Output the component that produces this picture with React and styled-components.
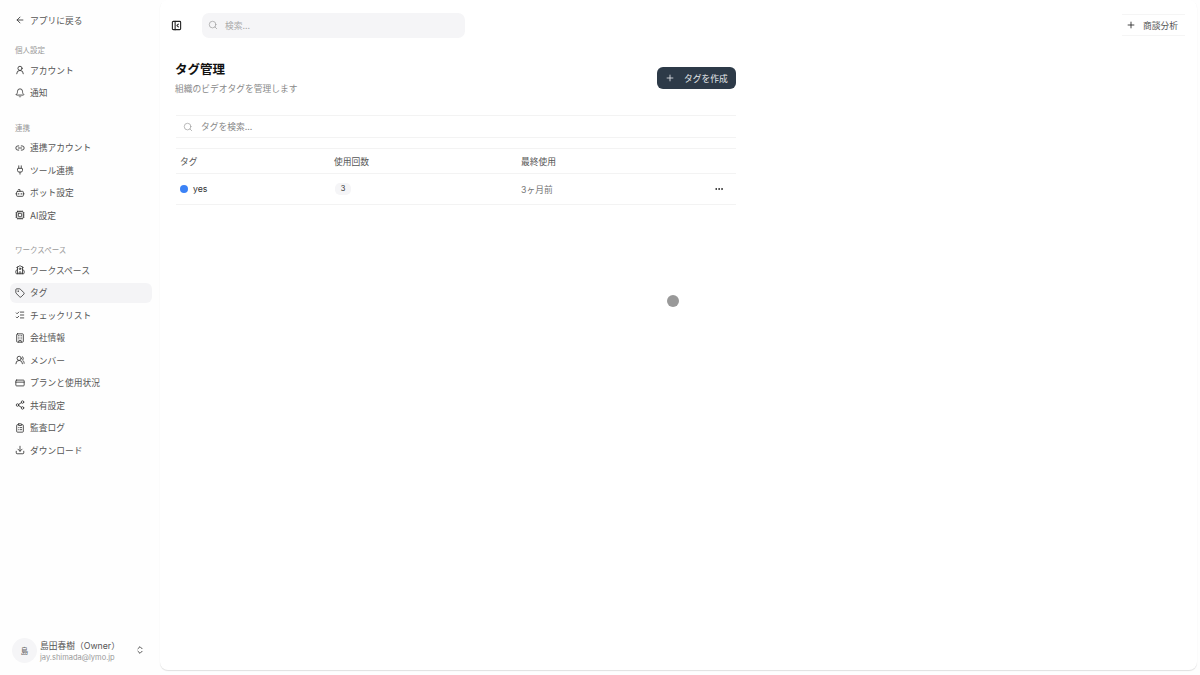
import React from "react";
import styled, { createGlobalStyle } from "styled-components";
import {
  ArrowLeft,
  Bell,
  Bot,
  Building,
  ChevronsUpDown,
  ClipboardList,
  CreditCard,
  Cpu,
  Download,
  Ellipsis,
  Link2,
  ListChecks,
  PanelLeftClose,
  Plug,
  Plus,
  School,
  Search,
  Share2,
  Tag,
  UserRound,
  UsersRound,
} from "lucide-react";

const GlobalStyle = createGlobalStyle`
  html, body {
    margin: 0;
    height: 100%;
    background: #fefefe;
    font-family: Inter, "Noto Sans CJK JP", sans-serif;
  }
  #root {
    height: 100%;
  }
  * {
    box-sizing: border-box;
  }
`;

const groups = [
  {
    label: "個人設定",
    items: [
      { icon: UserRound, text: "アカウント" },
      { icon: Bell, text: "通知" },
    ],
  },
  {
    label: "連携",
    items: [
      { icon: Link2, text: "連携アカウント" },
      { icon: Plug, text: "ツール連携" },
      { icon: Bot, text: "ボット設定" },
      { icon: Cpu, text: "AI設定" },
    ],
  },
  {
    label: "ワークスペース",
    items: [
      { icon: School, text: "ワークスペース" },
      { icon: Tag, text: "タグ", active: true },
      { icon: ListChecks, text: "チェックリスト" },
      { icon: Building, text: "会社情報" },
      { icon: UsersRound, text: "メンバー" },
      { icon: CreditCard, text: "プランと使用状況" },
      { icon: Share2, text: "共有設定" },
      { icon: ClipboardList, text: "監査ログ" },
      { icon: Download, text: "ダウンロード" },
    ],
  },
];

export default function App() {
  return (
    <>
      <GlobalStyle />
      <Page>
        <Sidebar>
          <NavItem>
            <ArrowLeft size={10} strokeWidth={2} />
            アプリに戻る
          </NavItem>
          {groups.map((group) => (
            <NavGroup key={group.label}>
              <GroupLabel>{group.label}</GroupLabel>
              {group.items.map((item) => (
                <NavItem key={item.text} $active={item.active}>
                  <item.icon size={10} strokeWidth={2} />
                  {item.text}
                </NavItem>
              ))}
            </NavGroup>
          ))}
          <UserBox>
            <Avatar>島</Avatar>
            <UserText>
              <UserName>島田春樹（Owner）</UserName>
              <UserMail>jay.shimada@lymo.jp</UserMail>
            </UserText>
            <ChevronsUpDown size={10} strokeWidth={2} color="#333" />
          </UserBox>
        </Sidebar>
        <Panel>
          <TopBar>
            <PanelLeftClose size={11} strokeWidth={2.4} color="#222" />
            <TopSearch>
              <Search size={10} strokeWidth={1.6} color="#999" />
              検索...
            </TopSearch>
            <AnalysisButton>
              <Plus size={10} strokeWidth={2} color="#222" />
              商談分析
            </AnalysisButton>
          </TopBar>
          <Content>
            <Heading>
              <div>
                <Title>タグ管理</Title>
                <Subtitle>組織のビデオタグを管理します</Subtitle>
              </div>
              <CreateButton>
                <Plus size={10} strokeWidth={2} />
                タグを作成
              </CreateButton>
            </Heading>
            <TagSearch>
              <Search size={10} strokeWidth={1.6} color="#999" />
              タグを検索...
            </TagSearch>
            <HeaderRow>
              <div>タグ</div>
              <div>使用回数</div>
              <div>最終使用</div>
            </HeaderRow>
            <TagRow>
              <TagName>
                <Dot />
                yes
              </TagName>
              <div>
                <Count>3</Count>
              </div>
              <LastUsed>3ヶ月前</LastUsed>
              <Ellipsis size={10} strokeWidth={2.4} color="#222" />
            </TagRow>
          </Content>
          <Loader />
        </Panel>
      </Page>
    </>
  );
}

const Page = styled.div`
  display: flex;
  height: 675px;
  overflow: hidden;
`;

const Sidebar = styled.aside`
  width: 160px;
  flex-shrink: 0;
  display: flex;
  flex-direction: column;
  padding: 10px 8px 10px 10px;
`;

const NavGroup = styled.nav`
  display: flex;
  flex-direction: column;
  gap: 2.5px;
  margin-top: 15px;

  &:nth-child(2) {
    margin-top: 10px;
  }
`;

const GroupLabel = styled.div`
  height: 20px;
  margin-bottom: -2.5px;
  padding: 1px 0 0 5px;
  font-size: 7.5px;
  line-height: 20px;
  color: #999;
`;

const NavItem = styled.a`
  height: 20px;
  display: flex;
  align-items: center;
  gap: 5px;
  padding-left: 5px;
  border-radius: 6px;
  font-size: 8.75px;
  color: #555;
  background: ${(p) => (p.$active ? "#f4f4f6" : "transparent")};

  svg {
    flex-shrink: 0;
    color: #333;
  }
`;

const UserBox = styled.div`
  margin-top: auto;
  height: 30px;
  display: flex;
  align-items: center;
  padding-left: 2px;
`;

const Avatar = styled.div`
  width: 25px;
  height: 25px;
  border-radius: 50%;
  display: grid;
  place-items: center;
  background: #f5f5f7;
  font-size: 7.5px;
  color: #666;
`;

const UserText = styled.div`
  width: 95px;
  margin-left: 3px;
  padding-top: 4px;
`;

const UserName = styled.div`
  font-size: 8.75px;
  line-height: 11px;
  color: #555;
`;

const UserMail = styled.div`
  font-size: 7.5px;
  line-height: 11px;
  color: #999;
`;

const Panel = styled.main`
  position: relative;
  flex: 1;
  margin: 0 3px 5px 0;
  background: #fff;
  border-radius: 8px;
  box-shadow: 0 1px 1px rgba(0, 0, 0, 0.12);
`;

const TopBar = styled.header`
  height: 50px;
  display: flex;
  align-items: center;
  padding: 0 12px 0 11px;
`;

const TopSearch = styled.div`
  width: 263px;
  height: 25px;
  margin-left: 20px;
  display: flex;
  align-items: center;
  gap: 7px;
  padding-left: 6px;
  border-radius: 7px;
  background: #f5f5f7;
  font-size: 8.75px;
  color: #aaa;
`;

const AnalysisButton = styled.div`
  width: 63px;
  height: 22px;
  margin-left: auto;
  display: flex;
  align-items: center;
  gap: 7px;
  padding-left: 4px;
  border-top: 1px solid #f5f5f5;
  border-bottom: 1px solid #f5f5f5;
  font-size: 8.75px;
  color: #555;
`;

const Content = styled.section`
  width: 576px;
  padding-left: 15px;
`;

const Heading = styled.div`
  height: 65px;
  display: flex;
  justify-content: space-between;
  align-items: flex-start;
  padding-top: 11px;
`;

const Title = styled.h1`
  margin: 0;
  font-size: 12.5px;
  line-height: 18px;
  font-weight: 600;
  color: #111;
`;

const Subtitle = styled.p`
  margin: 3px 0 0;
  font-size: 8.75px;
  line-height: 14px;
  color: #888;
`;

const CreateButton = styled.div`
  width: 79px;
  height: 22px;
  margin-top: 6px;
  display: flex;
  align-items: center;
  gap: 9px;
  padding-left: 8px;
  border-radius: 6px;
  background: #2d3a48;
  font-size: 8.75px;
  color: #e4e7ea;
`;

const TagSearch = styled.div`
  height: 23px;
  margin-left: 1px;
  display: flex;
  align-items: center;
  gap: 8px;
  padding-left: 7px;
  border-top: 1px solid #f3f3f3;
  border-bottom: 1px solid #f3f3f3;
  font-size: 8.75px;
  color: #888;
`;

const Columns = styled.div`
  margin-left: 1px;
  display: grid;
  grid-template-columns: 154px 187px 1fr 10px;
  align-items: center;
  padding: 0 12px 0 4px;
  border-bottom: 1px solid #f3f3f3;
  font-size: 8.75px;
`;

const HeaderRow = styled(Columns)`
  height: 26px;
  margin-top: 10px;
  border-top: 1px solid #f3f3f3;
  color: #555;
`;

const TagRow = styled(Columns)`
  height: 31px;
`;

const TagName = styled.div`
  display: flex;
  align-items: center;
  gap: 5px;
  color: #333;
`;

const Dot = styled.span`
  width: 8px;
  height: 8px;
  border-radius: 50%;
  background: #3b82f6;
`;

const Count = styled.span`
  display: inline-block;
  width: 16px;
  margin-left: 1px;
  border-radius: 5px;
  background: #f5f5f7;
  font-size: 7.5px;
  line-height: 12px;
  text-align: center;
  color: #333;
`;

const LastUsed = styled.div`
  color: #777;
`;

const Loader = styled.div`
  position: absolute;
  left: 507px;
  top: 295px;
  width: 12px;
  height: 12px;
  border-radius: 50%;
  background: #999;
`;
